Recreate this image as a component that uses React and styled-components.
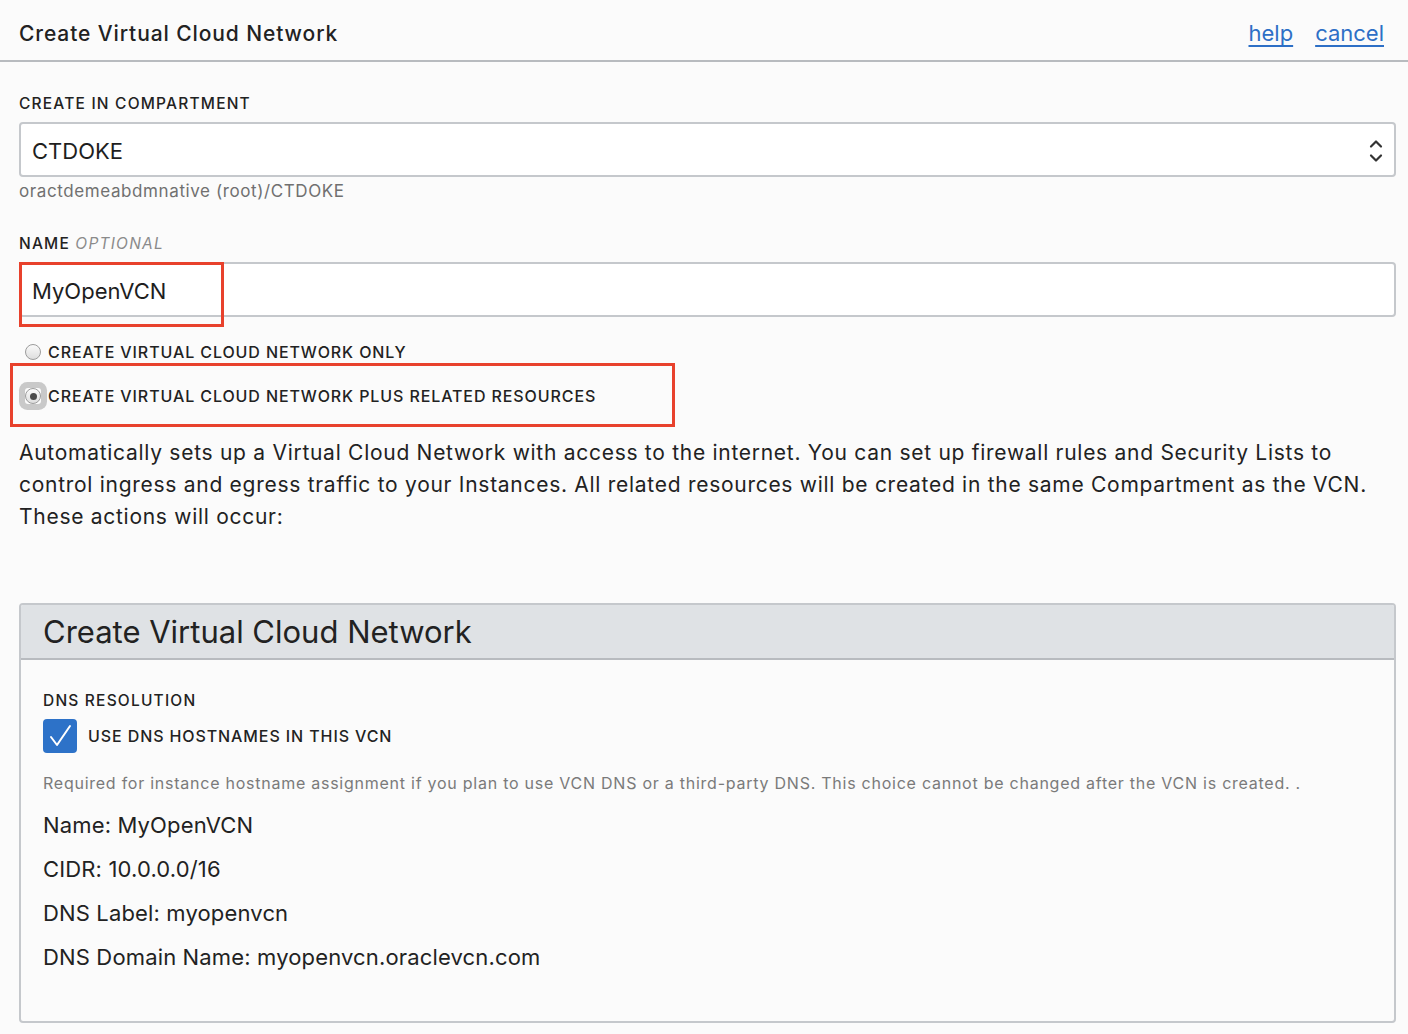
import React from 'react';
import styled, { createGlobalStyle } from 'styled-components';

const GlobalStyle = createGlobalStyle`
  html, body {
    margin: 0;
    padding: 0;
    background: #fbfbfb;
  }
  body {
    font-family: Inter, "Helvetica Neue", "Liberation Sans", sans-serif;
    color: #222;
  }
`;

const Page = styled.div`
  width: 1408px;
  min-height: 1034px;
  background: #fbfbfb;
`;

const Header = styled.header`
  display: flex;
  align-items: center;
  justify-content: space-between;
  height: 62px;
  padding: 6px 24px 0 19px;
  border-bottom: 2px solid #b8bbbf;
  box-sizing: border-box;
`;

const HeaderTitle = styled.h1`
  margin: 0;
  font-size: 21px;
  font-weight: 500;
  color: #222;
  letter-spacing: 0.9px;
`;

const Links = styled.div`
  display: flex;
  gap: 22px;
`;

const Link = styled.a`
  font-size: 22px;
  color: #2d6fc6;
  text-decoration: underline;
  text-underline-offset: 4px;
  text-decoration-thickness: 2px;
  cursor: pointer;
`;

const Body = styled.div`
  padding: 32px 12px 0 19px;
`;

const Label = styled.div`
  font-size: 15.5px;
  font-weight: 500;
  letter-spacing: 1.2px;
  text-transform: uppercase;
  color: #222;
  margin-bottom: ${p => p.$mb ?? 9}px;
`;

const Optional = styled.span`
  font-style: italic;
  font-weight: 400;
  color: #8a8a8a;
`;

const Field = styled.div`
  position: relative;
  display: flex;
  align-items: center;
  justify-content: space-between;
  height: 55px;
  box-sizing: border-box;
  border: 2px solid #c5c8cc;
  border-radius: 4px;
  background: #fff;
  padding: 3px 10px 0 11px;
  font-size: 22px;
  color: #1e1e1e;
`;

const Hint = styled.div`
  font-size: 17px;
  color: #707070;
  margin-top: 4px;
  letter-spacing: 0.6px;
`;

const Highlight = styled.div`
  position: absolute;
  box-sizing: border-box;
  border: 3px solid #e8412c;
  pointer-events: none;
`;

const Section = styled.div`
  margin-top: ${p => p.$mt || 0}px;
`;

const RadioRow = styled.label`
  position: relative;
  display: flex;
  align-items: center;
  gap: 7px;
  height: ${p => p.$h}px;
  padding-left: 6px;
  font-size: 16px;
  font-weight: 500;
  letter-spacing: 0.9px;
  text-transform: uppercase;
  color: #222;
`;

const RadioWrap = styled.span`
  display: flex;
  align-items: center;
  justify-content: center;
  width: 16px;
  height: 16px;
  border-radius: ${p => (p.$focus ? '3px' : '50%')};
  box-shadow: ${p => (p.$focus ? '0 0 0 6px #c9c9c9' : 'none')};
`;

const RadioDot = styled.span`
  display: flex;
  align-items: center;
  justify-content: center;
  width: 16px;
  height: 16px;
  box-sizing: border-box;
  border-radius: 50%;
  border: 1px solid #9c9c9c;
  background: linear-gradient(#fafafa, #dedede);
  &::after {
    content: '';
    display: ${p => (p.$checked ? 'block' : 'none')};
    width: 7px;
    height: 7px;
    border-radius: 50%;
    background: #4a4a4a;
  }
`;

const Description = styled.p`
  margin: 14px 0 0;
  font-size: 21px;
  line-height: 32px;
  letter-spacing: 0.72px;
  color: #222;
  padding-right: 10px;
`;

const Panel = styled.section`
  margin-top: 70px;
  border: 2px solid #c5c8cc;
  border-radius: 4px;
  height: 420px;
  box-sizing: border-box;
  background: #fbfbfb;
  overflow: hidden;
`;

const PanelHead = styled.div`
  display: flex;
  align-items: center;
  height: 53px;
  padding: 0 22px;
  background: #dfe2e5;
  border-bottom: 2px solid #b8bbbf;
`;

const PanelTitle = styled.h2`
  margin: 0;
  font-size: 31px;
  font-weight: 400;
  color: #222;
`;

const PanelBody = styled.div`
  padding: 31px 22px 0;
`;

const CheckRow = styled.div`
  display: flex;
  align-items: center;
  gap: 11px;
  font-size: 16px;
  font-weight: 500;
  letter-spacing: 0.9px;
  text-transform: uppercase;
  color: #222;
  margin-top: 9px;
`;

const CheckBox = styled.span`
  display: flex;
  align-items: center;
  justify-content: center;
  width: 34px;
  height: 34px;
  border-radius: 4px;
  background: #2d72c8;
`;

const SmallNote = styled.div`
  margin-top: 20px;
  font-size: 16px;
  color: #7a7a7a;
  letter-spacing: 0.75px;
`;

const Detail = styled.div`
  font-size: 22px;
  color: #222;
  letter-spacing: 0.15px;
  margin-top: ${p => p.$mt || 18}px;
`;

const Chevrons = () => (
  <svg width="16" height="26" viewBox="0 0 16 26" fill="none" stroke="#333" strokeWidth="2.2" strokeLinecap="round" strokeLinejoin="round">
    <path d="M3 8.5 L8 3.5 L13 8.5" />
    <path d="M3 17.5 L8 22.5 L13 17.5" />
  </svg>
);

const Check = () => (
  <svg width="26" height="26" viewBox="0 0 26 26" fill="none" stroke="#fff" strokeWidth="2" strokeLinecap="round" strokeLinejoin="round">
    <path d="M4 14 L10 22 L23 3" />
  </svg>
);

export default function App() {
  return (
    <Page>
      <GlobalStyle />
      <Header>
        <HeaderTitle>Create Virtual Cloud Network</HeaderTitle>
        <Links>
          <Link>help</Link>
          <Link>cancel</Link>
        </Links>
      </Header>
      <Body>
        <Label>Create in Compartment</Label>
        <Field>
          <span>CTDOKE</span>
          <Chevrons />
        </Field>
        <Hint>oractdemeabdmnative (root)/CTDOKE</Hint>

        <Section $mt={33}>
          <Label>Name <Optional>optional</Optional></Label>
          <Field>
            <span>MyOpenVCN</span>
            <Highlight style={{ left: -2, top: -2, width: 205, height: 65 }} />
          </Field>
        </Section>

        <Section $mt={18}>
          <RadioRow $h={34}>
            <RadioDot />
            Create Virtual Cloud Network Only
          </RadioRow>
          <RadioRow $h={54}>
            <RadioWrap $focus>
              <RadioDot $checked />
            </RadioWrap>
            Create Virtual Cloud Network Plus Related Resources
            <Highlight style={{ left: -9, top: -6, width: 665, height: 64 }} />
          </RadioRow>
        </Section>

        <Description>
          Automatically sets up a Virtual Cloud Network with access to the internet. You can set up firewall rules and Security Lists to control ingress and egress traffic to your Instances. All related resources will be created in the same Compartment as the VCN. These actions will occur:
        </Description>

        <Panel>
          <PanelHead>
            <PanelTitle>Create Virtual Cloud Network</PanelTitle>
          </PanelHead>
          <PanelBody>
            <Label $mb={0}>DNS Resolution</Label>
            <CheckRow>
              <CheckBox><Check /></CheckBox>
              Use DNS hostnames in this VCN
            </CheckRow>
            <SmallNote>
              Required for instance hostname assignment if you plan to use VCN DNS or a third-party DNS. This choice cannot be changed after the VCN is created. .
            </SmallNote>
            <Detail $mt={19}>Name: MyOpenVCN</Detail>
            <Detail>CIDR: 10.0.0.0/16</Detail>
            <Detail>DNS Label: myopenvcn</Detail>
            <Detail>DNS Domain Name: myopenvcn.oraclevcn.com</Detail>
          </PanelBody>
        </Panel>
      </Body>
    </Page>
  );
}
